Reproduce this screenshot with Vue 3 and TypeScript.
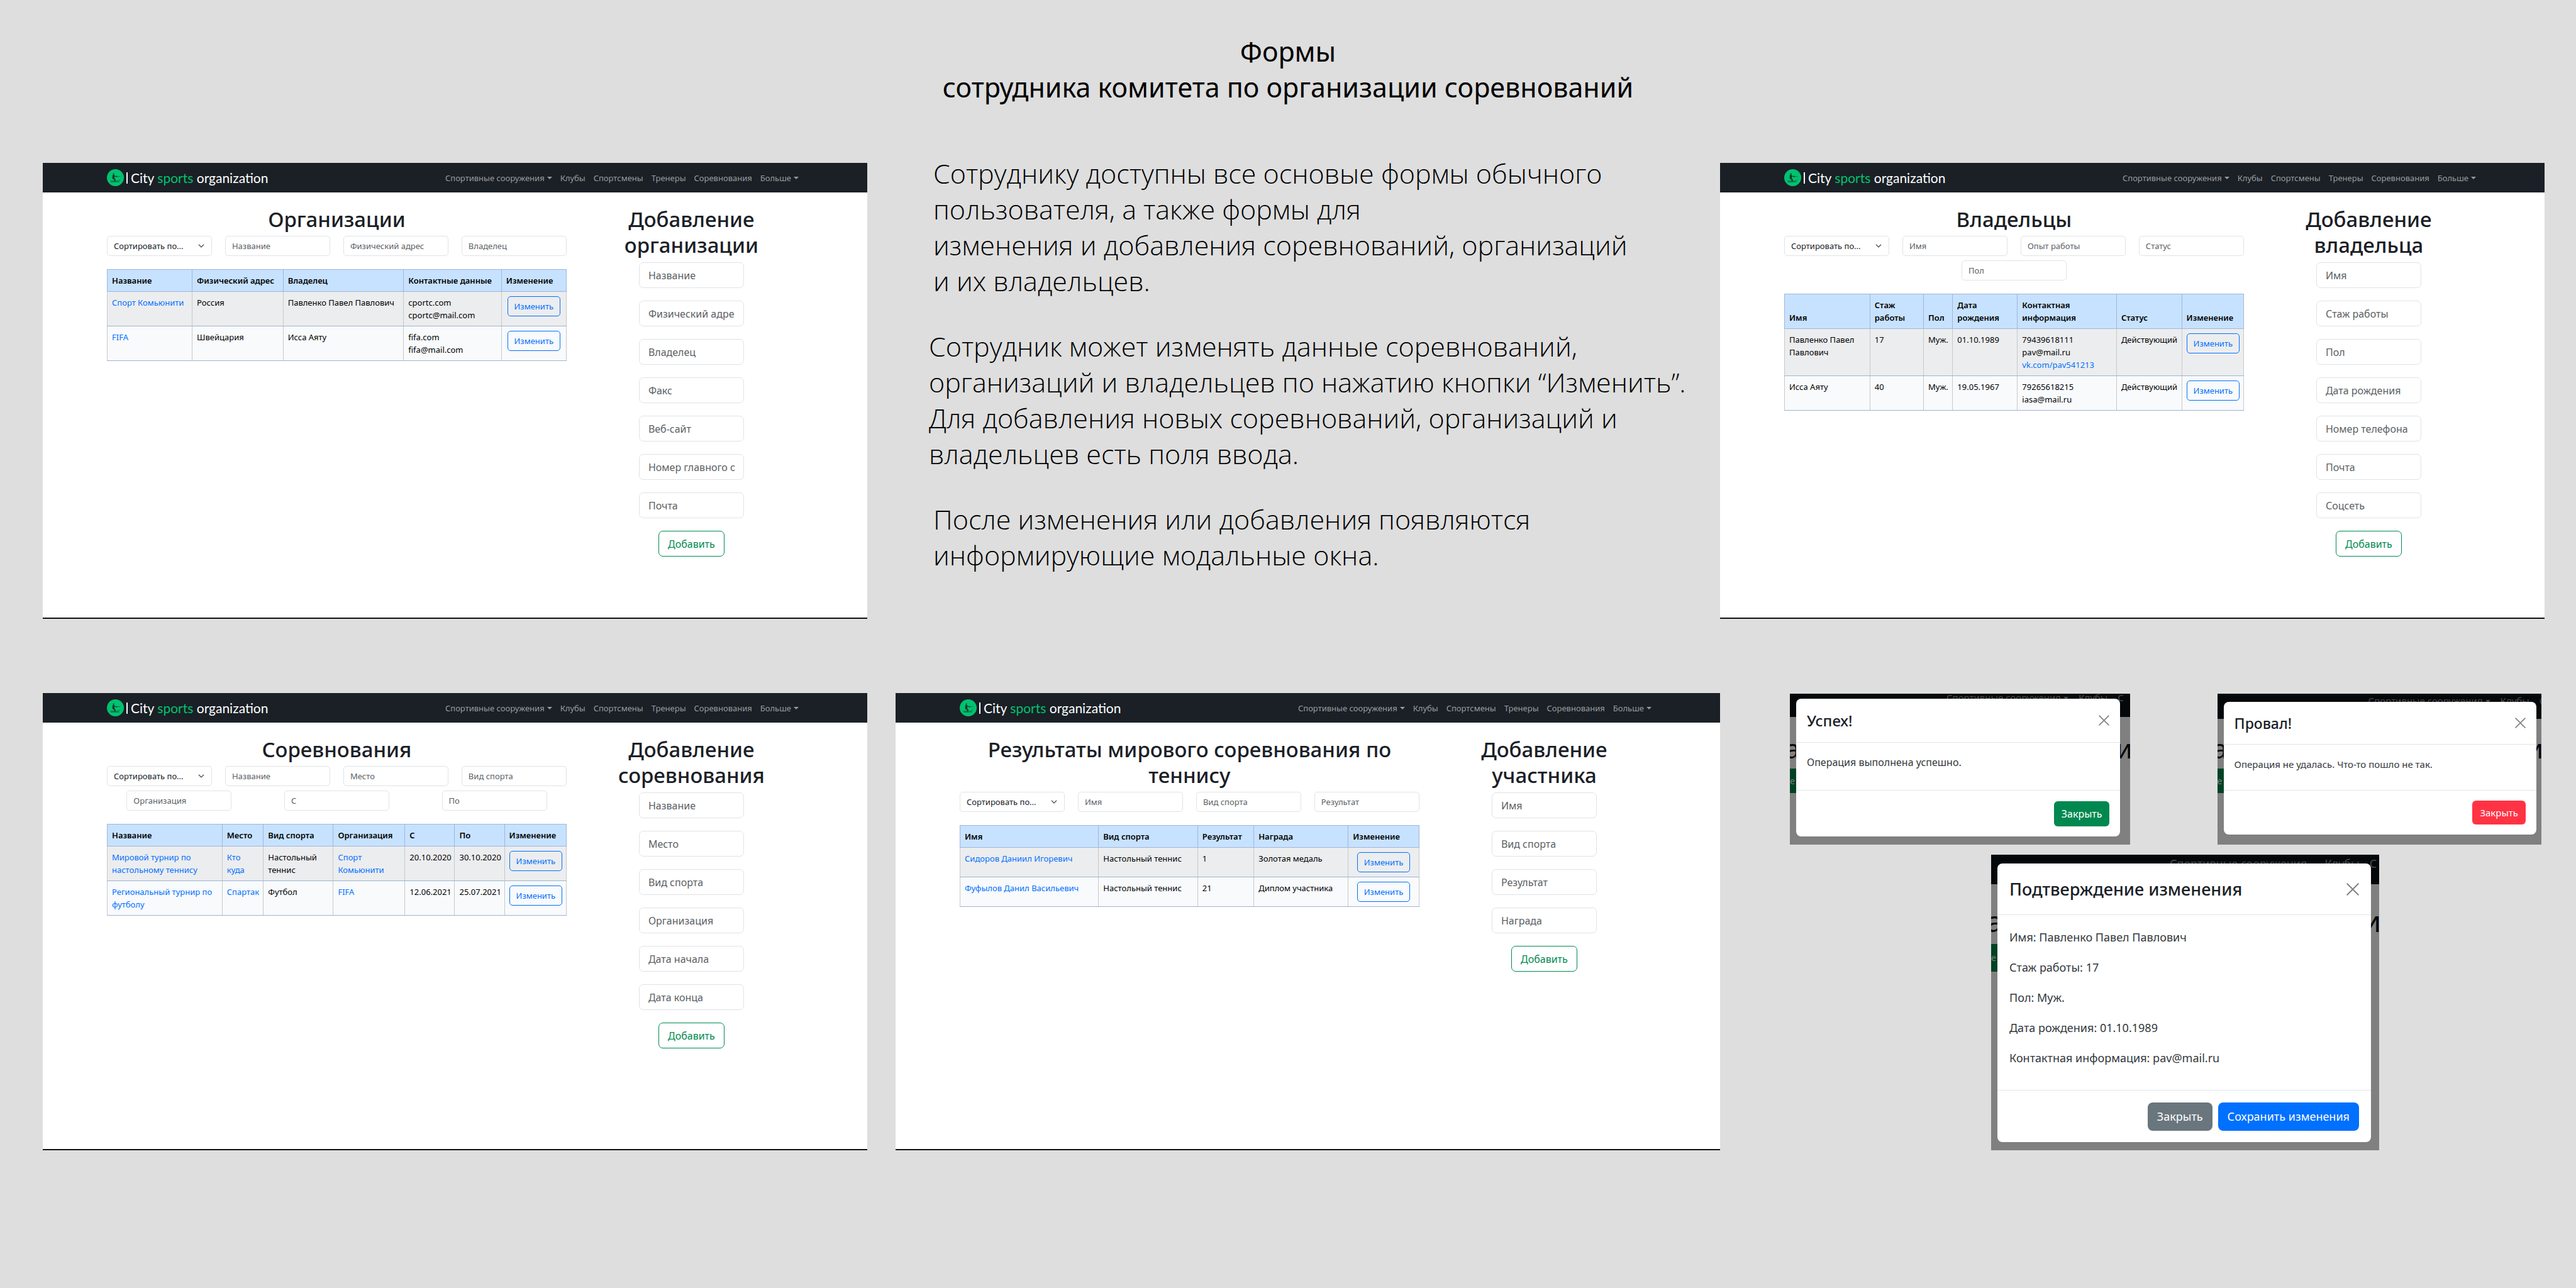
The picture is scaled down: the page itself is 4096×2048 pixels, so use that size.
<script setup lang="ts">
interface Cell {
  lines: string[]
  link?: boolean
  linkLast?: boolean
}

interface Screen {
  id: string
  area: string
  title: string[]
  formTitle: string[]
  filters: string[]
  columns: { name: string; width: number }[]
  rows: Cell[][]
  fields: string[]
}

interface Dialog {
  id: string
  title: string
  body: string[]
  actions: { label: string; tone: string }[]
}

const nav = [
  { label: 'Спортивные сооружения', caret: true },
  { label: 'Клубы', caret: false },
  { label: 'Спортсмены', caret: false },
  { label: 'Тренеры', caret: false },
  { label: 'Соревнования', caret: false },
  { label: 'Больше', caret: true },
]

const t = (...lines: string[]): Cell => ({ lines })
const a = (...lines: string[]): Cell => ({ lines, link: true })

const screens: Screen[] = [
  {
    id: 'organizations',
    area: 'orgs',
    title: ['Организации'],
    formTitle: ['Добавление', 'организации'],
    filters: ['Название', 'Физический адрес', 'Владелец'],
    columns: [
      { name: 'Название', width: 198 },
      { name: 'Физический адрес', width: 212 },
      { name: 'Владелец', width: 281 },
      { name: 'Контактные данные', width: 228 },
      { name: 'Изменение', width: 151 },
    ],
    rows: [
      [a('Спорт Комьюнити'), t('Россия'), t('Павленко Павел Павлович'), t('cportc.com', 'cportc@mail.com')],
      [a('FIFA'), t('Швейцария'), t('Исса Аяту'), t('fifa.com', 'fifa@mail.com')],
    ],
    fields: ['Название', 'Физический адрес', 'Владелец', 'Факс', 'Веб-сайт', 'Номер главного офиса', 'Почта'],
  },
  {
    id: 'owners',
    area: 'owners',
    title: ['Владельцы'],
    formTitle: ['Добавление', 'владельца'],
    filters: ['Имя', 'Опыт работы', 'Статус', 'Пол'],
    columns: [
      { name: 'Имя', width: 199 },
      { name: 'Стаж работы', width: 125 },
      { name: 'Пол', width: 68 },
      { name: 'Дата рождения', width: 151 },
      { name: 'Контактная информация', width: 231 },
      { name: 'Статус', width: 152 },
      { name: 'Изменение', width: 144 },
    ],
    rows: [
      [
        t('Павленко Павел', 'Павлович'),
        t('17'),
        t('Муж.'),
        t('01.10.1989'),
        { lines: ['79439618111', 'pav@mail.ru', 'vk.com/pav541213'], linkLast: true },
        t('Действующий'),
      ],
      [t('Исса Аяту'), t('40'), t('Муж.'), t('19.05.1967'), t('79265618215', 'iasa@mail.ru'), t('Действующий')],
    ],
    fields: ['Имя', 'Стаж работы', 'Пол', 'Дата рождения', 'Номер телефона', 'Почта', 'Соцсеть'],
  },
  {
    id: 'competitions',
    area: 'comps',
    title: ['Соревнования'],
    formTitle: ['Добавление', 'соревнования'],
    filters: ['Название', 'Место', 'Вид спорта', 'Организация', 'С', 'По'],
    columns: [
      { name: 'Название', width: 268 },
      { name: 'Место', width: 96 },
      { name: 'Вид спорта', width: 163 },
      { name: 'Организация', width: 167 },
      { name: 'С', width: 116 },
      { name: 'По', width: 116 },
      { name: 'Изменение', width: 144 },
    ],
    rows: [
      [
        a('Мировой турнир по', 'настольному теннису'),
        a('Кто', 'куда'),
        t('Настольный', 'теннис'),
        a('Спорт', 'Комьюнити'),
        t('20.10.2020'),
        t('30.10.2020'),
      ],
      [a('Региональный турнир по', 'футболу'), a('Спартак'), t('Футбол'), a('FIFA'), t('12.06.2021'), t('25.07.2021')],
    ],
    fields: ['Название', 'Место', 'Вид спорта', 'Организация', 'Дата начала', 'Дата конца'],
  },
  {
    id: 'results',
    area: 'results',
    title: ['Результаты мирового соревнования по', 'теннису'],
    formTitle: ['Добавление', 'участника'],
    filters: ['Имя', 'Вид спорта', 'Результат'],
    columns: [
      { name: 'Имя', width: 323 },
      { name: 'Вид спорта', width: 231 },
      { name: 'Результат', width: 131 },
      { name: 'Награда', width: 220 },
      { name: 'Изменение', width: 165 },
    ],
    rows: [
      [a('Сидоров Даниил Игоревич'), t('Настольный теннис'), t('1'), t('Золотая медаль')],
      [a('Фуфылов Данил Васильевич'), t('Настольный теннис'), t('21'), t('Диплом участника')],
    ],
    fields: ['Имя', 'Вид спорта', 'Результат', 'Награда'],
  },
]

const dialogs: Dialog[] = [
  {
    id: 'success',
    title: 'Успех!',
    body: ['Операция выполнена успешно.'],
    actions: [{ label: 'Закрыть', tone: 'green' }],
  },
  {
    id: 'failure',
    title: 'Провал!',
    body: ['Операция не удалась. Что-то пошло не так.'],
    actions: [{ label: 'Закрыть', tone: 'red' }],
  },
  {
    id: 'confirm',
    title: 'Подтверждение изменения',
    body: [
      'Имя: Павленко Павел Павлович',
      'Стаж работы: 17',
      'Пол: Муж.',
      'Дата рождения: 01.10.1989',
      'Контактная информация: pav@mail.ru',
    ],
    actions: [
      { label: 'Закрыть', tone: 'gray' },
      { label: 'Сохранить изменения', tone: 'blue' },
    ],
  },
]

const notes = [
  {
    shifted: false,
    lines: [
      'Сотруднику доступны все основые формы обычного',
      'пользователя, а также формы для',
      'изменения и добавления соревнований, организаций',
      'и их владельцев.',
    ],
  },
  {
    shifted: true,
    lines: [
      'Сотрудник может изменять данные соревнований,',
      'организаций и владельцев по нажатию кнопки “Изменить”.',
      'Для добавления новых соревнований, организаций и',
      'владельцев есть поля ввода.',
    ],
  },
  {
    shifted: false,
    lines: ['После изменения или добавления появляются', 'информирующие модальные окна.'],
  },
]

const share = (s: Screen, width: number): string =>
  `${(100 * width) / s.columns.reduce((sum, c) => sum + c.width, 0)}%`
</script>

<template>
  <main class="board">
    <h1 class="board-title">Формы<br />сотрудника комитета по организации соревнований</h1>

    <section v-for="s in screens" :key="s.id" class="screen" :class="`at-${s.area}`">
      <header class="navbar">
        <a class="brand" href="#">
          <svg class="brand-mark" viewBox="0 0 39 39" aria-hidden="true">
            <circle cx="19.500" cy="19.500" r="19.500" fill="#00c26f" />
            <g fill="#14312b" stroke="#14312b" stroke-linecap="round" stroke-linejoin="round">
              <circle cx="15.500" cy="11" r="1.600" stroke="none" />
              <path d="M13.500 13.500l3-.2 1 3.700-.6 4.500 2.600 1.500-.6 4.500h-1.800l.2-3.400-4.300-2.600z" stroke-width=".6" />
              <path d="M16.500 14.500l4 2.500h3" fill="none" stroke-width="1.400" />
              <path d="M20 16.800h10.500M22.500 15.300v3" fill="none" stroke-width=".8" />
              <path d="M8.500 27.200h17.500l4-2.700M9 29.200h19" fill="none" stroke-width="1" />
            </g>
          </svg>
          <span class="brand-bar"></span>
          <span class="brand-name">City <em>sports</em> organization</span>
        </a>
        <nav class="nav-links">
          <a v-for="n in nav" :key="n.label" href="#">{{ n.label }}<i v-if="n.caret" class="caret"></i></a>
        </nav>
      </header>

      <div class="columns">
        <div class="listing">
          <h2><template v-for="(l, i) in s.title" :key="l"><br v-if="i" />{{ l }}</template></h2>
          <div class="filters">
            <div class="select-wrap">
              <select :aria-label="`Сортировать: ${s.title[0]}`">
                <option>Сортировать по...</option>
              </select>
              <svg class="chevron" viewBox="0 0 16 16" aria-hidden="true">
                <path d="M2 5l6 6 6-6" fill="none" stroke="#343a40" stroke-width="2" stroke-linecap="round" stroke-linejoin="round" />
              </svg>
            </div>
            <input v-for="f in s.filters" :key="f" type="text" :placeholder="f" :aria-label="f" />
          </div>

          <table>
            <colgroup>
              <col v-for="c in s.columns" :key="c.name" :style="{ width: share(s, c.width) }" />
            </colgroup>
            <thead>
              <tr>
                <th v-for="c in s.columns" :key="c.name" scope="col">{{ c.name }}</th>
              </tr>
            </thead>
            <tbody>
              <tr v-for="(r, ri) in s.rows" :key="ri">
                <td v-for="(c, ci) in r" :key="ci">
                  <a v-if="c.link" href="#"><template v-for="(l, i) in c.lines" :key="l"><br v-if="i" />{{ l }}</template></a>
                  <template v-for="(l, i) in c.lines" v-else :key="l">
                    <br v-if="i" /><a v-if="c.linkLast && i === c.lines.length - 1" href="#">{{ l }}</a><template v-else>{{ l }}</template>
                  </template>
                </td>
                <td class="action"><button type="button" class="edit">Изменить</button></td>
              </tr>
            </tbody>
          </table>
        </div>

        <form class="add-form" @submit.prevent>
          <h2><template v-for="(l, i) in s.formTitle" :key="l"><br v-if="i" />{{ l }}</template></h2>
          <input v-for="f in s.fields" :key="f" type="text" :placeholder="f" :aria-label="f" />
          <button type="submit" class="add">Добавить</button>
        </form>
      </div>
    </section>

    <section class="notes">
      <p v-for="(n, ni) in notes" :key="ni" :class="{ shifted: n.shifted }">
        <template v-for="(l, i) in n.lines" :key="l"><br v-if="i" />{{ l }}</template>
      </p>
    </section>

    <section class="dialogs">
      <div v-for="d in dialogs" :key="d.id" class="shot" :class="`shot-${d.id}`">
        <div class="backdrop" aria-hidden="true">
          <div class="dim-nav">
            <span>Спортивные сооружения<i class="caret"></i></span><span>Клубы</span><span>С</span>
          </div>
          <span class="dim-letter left">а</span>
          <span class="dim-letter right">и</span>
          <span class="dim-button">е</span>
        </div>
        <div class="dialog" role="dialog" :aria-label="d.title">
          <header>
            <h3>{{ d.title }}</h3>
            <button type="button" class="close" aria-label="×">
              <svg viewBox="0 0 16 16" aria-hidden="true">
                <path d="M1 1l14 14M15 1L1 15" fill="none" stroke="#7f7f7f" stroke-width="1.500" stroke-linecap="round" />
              </svg>
            </button>
          </header>
          <div class="body">
            <p v-for="l in d.body" :key="l">{{ l }}</p>
          </div>
          <footer>
            <button v-for="b in d.actions" :key="b.label" type="button" :class="b.tone">{{ b.label }}</button>
          </footer>
        </div>
      </div>
    </section>
  </main>
</template>

<style>
body {
  margin: 0;
  background: #dedede;
}
</style>

<style scoped>
.board,
.board * {
  box-sizing: border-box;
}

.board {
  display: grid;
  grid-template-columns: 1fr 45px 1fr 1fr;
  grid-template-areas:
    'title title title title'
    'orgs notes notes owners'
    'comps . results dialogs';
  row-gap: 118px;
  min-height: 100vh;
  padding: 0 50px 0 68px;
  align-content: start;
  background: #dedede;
  color: #1a2026;
  font-family: 'Noto Sans', 'Open Sans', sans-serif;
  font-size: 13px;
  line-height: 20px;
}

button,
input,
select {
  margin: 0;
  font-family: inherit;
}

a {
  color: #0070ff;
  text-decoration: none;
}

.board-title {
  grid-area: title;
  margin: 53px 18px -26px 0;
  color: #000;
  font-size: 43px;
  font-weight: 400;
  line-height: 57px;
  text-align: center;
}

.at-orgs { grid-area: orgs; }
.at-owners { grid-area: owners; }
.at-comps { grid-area: comps; }
.at-results { grid-area: results; }

.screen {
  min-height: 725px;
  border-bottom: 2px solid #111;
  background: #fff;
}

.navbar {
  display: flex;
  align-items: center;
  justify-content: space-between;
  height: 47px;
  padding: 0 109px 0 102px;
  background: #1a2026;
}

.brand {
  display: flex;
  align-items: center;
  color: #fff;
  font-family: Lato, sans-serif;
  font-size: 21px;
  line-height: 26px;
}

.brand-mark {
  width: 27px;
  height: 27px;
}

.brand-bar {
  width: 2px;
  height: 18px;
  margin: 0 5px 0 4px;
  background: #fff;
}

.brand-name em {
  color: #00c26f;
  font-style: normal;
}

.nav-links {
  display: flex;
  gap: 13px;
}

.nav-links a {
  color: #999c9e;
}

.caret {
  display: inline-block;
  margin-left: 4px;
  border-top: 4px solid;
  border-right: 4px solid transparent;
  border-left: 4px solid transparent;
  vertical-align: 3px;
}

.columns {
  display: grid;
  grid-template-columns: 107fr 52fr;
  align-items: start;
  gap: 21px;
  padding: 21px 102px;
}

h2 {
  margin: 0 0 6px;
  padding-top: 1px;
  font-size: 33px;
  font-weight: 500;
  line-height: 41px;
  text-align: center;
}

.filters {
  display: flex;
  flex-wrap: wrap;
  justify-content: space-around;
  gap: 7px 21px;
  margin-bottom: 21px;
}

.select-wrap {
  position: relative;
}

.select-wrap,
.filters input {
  width: calc((100% - 63px) / 4);
}

.filters input,
select {
  height: 32px;
  padding: 0 10px;
  border: 1px solid #dfe3e7;
  border-radius: 5px;
  background: #fff;
  font-size: 13px;
}

select {
  width: 100%;
  appearance: none;
  color: #1a2026;
}

.chevron {
  position: absolute;
  top: 11px;
  right: 12px;
  width: 10px;
  height: 10px;
  pointer-events: none;
}

input::placeholder {
  color: #5b6165;
  opacity: 1;
}

table {
  width: 100%;
  border-collapse: collapse;
  table-layout: fixed;
}

th,
td {
  padding: 7px;
  border: 1px solid #c6c8ca;
  color: #000;
  text-align: left;
  vertical-align: top;
}

th {
  border-color: #a0b6d8;
  background: #c7e2ff;
  font-weight: 600;
  vertical-align: bottom;
}

tbody tr {
  background: #f8fafc;
}

tbody tr:nth-child(odd) {
  background: #ecedef;
}

td {
  border-bottom-color: #9fb4cc;
}

.action {
  text-align: center;
}

.edit {
  display: inline-block;
  height: 32px;
  padding: 0 10px;
  border: 1px solid #0070ff;
  border-radius: 5px;
  background: transparent;
  color: #0070ff;
  font-size: 13px;
  vertical-align: top;
}

.add-form {
  display: flex;
  flex-direction: column;
  align-items: center;
  gap: 20px;
}

.add-form h2 {
  margin-bottom: -13px;
}

.add-form input {
  width: 167px;
  height: 41px;
  padding: 0 14px;
  border: 1px solid #dfe3e7;
  border-radius: 7px;
  background: #fff;
  font-size: 16px;
}

.add {
  height: 41px;
  padding: 0 14px;
  border: 1px solid #008a50;
  border-radius: 7px;
  background: #fff;
  color: #008a50;
  font-size: 16px;
}

.notes {
  grid-area: notes;
  padding: 0 0 0 105px;
  margin-top: -12px;
  color: #000;
  font-family: 'Open Sans', 'Noto Sans', sans-serif;
  font-size: 43px;
  font-weight: 300;
  line-height: 57px;
  white-space: nowrap;
}

.notes p {
  margin: 0 0 47px;
}

.notes .shifted {
  margin-left: -7px;
}

.dialogs {
  grid-area: dialogs;
  display: grid;
  grid-template-columns: 541fr 138fr 515fr;
  align-content: start;
  row-gap: 16px;
  padding: 1px 5px 0 111px;
}

.shot {
  position: relative;
  overflow: hidden;
  background: #808080;
}

.shot-success {
  padding: 8px 16px 13px 10px;
}

.shot-failure {
  grid-column: 3;
  padding: 13px 8px 16px 10px;
}

.shot-confirm {
  grid-column: 1 / -1;
  margin: 0 258px 0 320px;
  padding: 14px 13px 13px 10px;
}

.backdrop {
  position: absolute;
  inset: 0;
}

.dim-nav {
  display: flex;
  gap: 16px;
  height: 37px;
  padding-left: 249px;
  overflow: hidden;
  background: #05080a;
  color: #4d4e4f;
  font-size: 15px;
  line-height: 12px;
  white-space: nowrap;
}

.shot-failure .dim-nav {
  height: 40px;
  padding-top: 5px;
  padding-left: 240px;
}

.shot-confirm .dim-nav {
  height: 47px;
  padding-top: 8px;
  padding-left: 284px;
  font-size: 18px;
}

.dim-letter {
  position: absolute;
  top: 66px;
  color: #05080a;
  font-size: 41px;
  line-height: 42px;
}

.shot-confirm .dim-letter {
  top: 84px;
  font-size: 46px;
}

.dim-letter.left {
  left: -7px;
}

.dim-letter.right {
  right: -3px;
}

.dim-button {
  position: absolute;
  top: 119px;
  left: 0;
  width: 20px;
  height: 39px;
  background: #004225;
  color: #808080;
  font-size: 14px;
  line-height: 39px;
}

.shot-confirm .dim-button {
  top: 142px;
  height: 44px;
  line-height: 44px;
}

.dialog {
  position: relative;
  border-radius: 8px;
  background: #fff;
}

.dialog header {
  display: flex;
  align-items: center;
  justify-content: space-between;
  height: 70px;
  padding: 0 17px;
  border-bottom: 1px solid #dfe5e9;
}

h3 {
  margin: 0;
  font-size: 24px;
  font-weight: 500;
  line-height: 32px;
}

.close {
  display: flex;
  padding: 0;
  border: 0;
  background: none;
}

.close svg {
  width: 17px;
  height: 17px;
}

.body {
  padding: 20px 17px 33px;
  color: #33383d;
  font-size: 16px;
  line-height: 22px;
}

.body p {
  margin: 0;
}

.dialog footer {
  display: flex;
  align-items: center;
  justify-content: flex-end;
  gap: 9px;
  height: 74px;
  padding: 0 17px;
  border-top: 1px solid #dfe5e9;
}

.dialog footer button {
  height: 40px;
  padding: 0 12px;
  border: 0;
  border-radius: 6px;
  color: #fff;
  font-size: 16px;
}

.dialog footer .green { background: #008850; }
.dialog footer .red { background: #ff3344; }
.dialog footer .gray { background: #6a767d; }
.dialog footer .blue { background: #0070ff; }

.shot-failure .dialog header {
  height: 68px;
}

.shot-failure h3 {
  font-size: 23px;
}

.shot-failure .body {
  padding-bottom: 30px;
  font-size: 15px;
}

.shot-failure .dialog footer {
  height: 71px;
}

.shot-failure .dialog footer button {
  height: 38px;
  font-size: 15px;
}

.shot-confirm .dialog header {
  height: 82px;
  padding: 0 19px;
}

.shot-confirm h3 {
  font-size: 27px;
}

.shot-confirm .close svg {
  width: 20px;
  height: 20px;
}

.shot-confirm .body {
  padding: 22px 19px 38px;
  font-size: 18px;
  line-height: 26px;
}

.shot-confirm .body p + p {
  margin-top: 22px;
}

.shot-confirm .dialog footer {
  height: 83px;
  padding: 0 19px;
}

.shot-confirm .dialog footer button {
  height: 45px;
  padding: 0 15px;
  border-radius: 8px;
  font-size: 18px;
}
</style>
